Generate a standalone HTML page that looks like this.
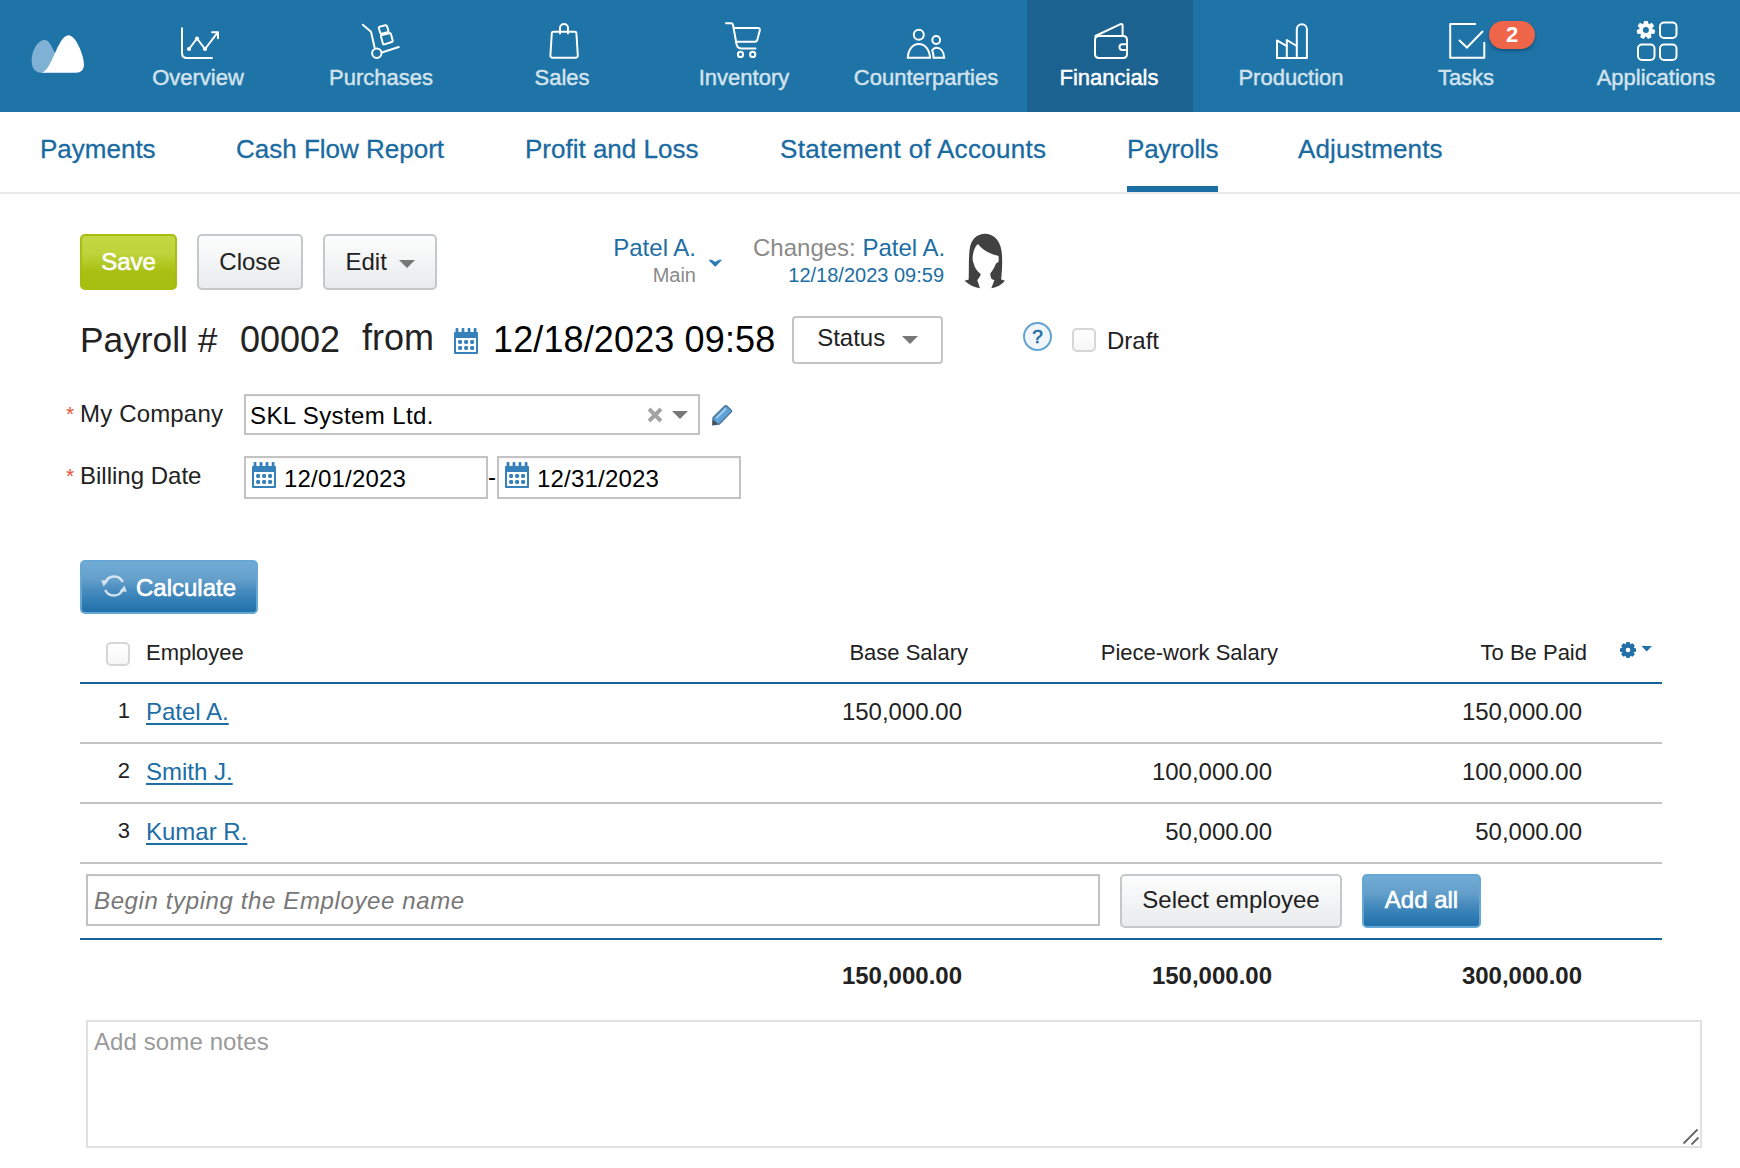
<!DOCTYPE html>
<html>
<head>
<meta charset="utf-8">
<title>Payroll</title>
<style>
*{box-sizing:border-box;margin:0;padding:0}
html,body{width:1740px;height:1168px;overflow:hidden;background:#fff}
body{font-family:"Liberation Sans",sans-serif;color:#222;position:relative}
.abs{position:absolute;white-space:nowrap}
/* top nav */
#nav{position:absolute;left:0;top:0;width:1740px;height:112px;background:#1e73a7}
#nav .active{position:absolute;left:1027px;top:0;width:166px;height:112px;background:#1b6291}
.nl{position:absolute;top:65px;height:26px;line-height:26px;font-size:22px;color:#d3e3ee;text-align:center;width:200px;margin-left:-100px;white-space:nowrap;-webkit-text-stroke:0.45px #d3e3ee}
.nl.on{color:#fff;-webkit-text-stroke:0.45px #fff}
.ni{position:absolute;overflow:visible}
/* sub nav */
#sub{position:absolute;left:0;top:112px;width:1740px;height:82px;border-bottom:2px solid #e7e7e7;background:#fff}
.sl{position:absolute;top:20px;height:34px;line-height:34px;font-size:26px;color:#1a6aa2;white-space:nowrap;-webkit-text-stroke:0.3px #1a6aa2}
#sub .ul{position:absolute;left:1127px;top:74px;width:91px;height:6px;background:#1c6ea4}
/* buttons */
.btn{position:absolute;border-radius:5px;font-size:24px;text-align:center;white-space:nowrap}
.grey{border:2px solid #c4c8cb;background:linear-gradient(#fdfdfd,#e9ebec);color:#222}
.green{border:2px solid #a6be12;background:linear-gradient(#c1d842 0%,#bdd43c 33%,#a9c012 68%,#a7bf10 100%);color:#fff;-webkit-text-stroke:0.6px #fff}
.blue{border:2px solid #67a7d4;background:linear-gradient(#70abd4 0%,#639fca 35%,#4a8dbf 55%,#3480b6 75%,#2170a9 100%);color:#fff;-webkit-text-stroke:0.6px #fff}
.white{border:2px solid #c4c4c4;background:#fff;color:#222}
.caret{display:inline-block;width:0;height:0;border-left:8px solid transparent;border-right:8px solid transparent;border-top:8px solid #777;vertical-align:middle}
.lnk{color:#1c6ea4}
.g{color:#8a8a8a}
.cb{width:24px;height:24px;border:2px solid #d6d6d6;border-radius:5px;background:linear-gradient(#fff,#f6f6f6)}
.inp{border:2px solid #c3c3c3;background:#fff;box-shadow:inset 0 1px 1px rgba(0,0,0,.04)}
.th{font-size:22px;line-height:28px;color:#222}
.td{font-size:24px;line-height:30px;color:#222}
.td.b{font-weight:bold}
.num{font-size:22px;line-height:28px;color:#222;right:1610px}
.nm{font-size:24px;line-height:30px;color:#1c6ea4;text-decoration:underline;left:146px;text-underline-offset:3px;text-decoration-thickness:2px}
.hr{left:80px;width:1582px;height:2px;background:#c4c4c4}
.hr.blue2{background:#17629b}
</style>
</head>
<body>
<svg width="0" height="0" style="position:absolute">
<defs>
<symbol id="cal" viewBox="0 0 24 28">
  <rect x="0" y="5" width="24" height="22" rx="1" fill="#3681b9"/>
  <rect x="2" y="11" width="20" height="14" fill="#fff"/>
  <g fill="#3681b9">
    <rect x="1.6" y="1" width="2.8" height="5" rx="0.8"/><rect x="7.6" y="1" width="2.8" height="5" rx="0.8"/><rect x="13.6" y="1" width="2.8" height="5" rx="0.8"/><rect x="19.7" y="1" width="2.8" height="5" rx="0.8"/>
    <rect x="4.1" y="13" width="4" height="4" rx="1.4"/><rect x="10.1" y="13" width="4" height="4" rx="1.4"/><rect x="16.1" y="13" width="4" height="4" rx="1.4"/>
    <rect x="4.1" y="19" width="4" height="4" rx="1.4"/><rect x="10.1" y="19" width="4" height="4" rx="1.4"/><rect x="16.1" y="19" width="4" height="4" rx="1.4"/>
  </g>
</symbol>
<symbol id="pencil" viewBox="0 0 21 21">
  <path d="M1 12.8 L12.8 1 Q13.8 0.2 14.8 1.1 L19.2 5.2 Q20 6 19.1 7 L7.4 19 L0.7 19.8 Z" fill="#5ba3d9" stroke="#4f7496" stroke-width="1.3" stroke-linejoin="round"/>
  <path d="M4.2 13.2 L14 3.6" stroke="#b4d6f0" stroke-width="1.5" fill="none"/>
  <path d="M0.6 19.9 L1 14.2 L6.2 19.3 Z" fill="#4a4f55"/>
</symbol>
<symbol id="refresh" viewBox="0 0 28 28">
  <g opacity="0.82">
  <path d="M5.2 10.6 A 9.6 9.6 0 0 1 22.8 10" stroke="#eef5fa" stroke-width="2.4" fill="none"/>
  <path d="M22.8 17.4 A 9.6 9.6 0 0 1 5.2 18" stroke="#eef5fa" stroke-width="2.4" fill="none"/>
  <path d="M1.2 8.2 L8.6 8.6 L3.6 14.4 Z" fill="#eef5fa"/>
  <path d="M26.8 19.8 L19.4 19.4 L24.4 13.6 Z" fill="#eef5fa"/>
  </g>
</symbol>
<symbol id="gear" viewBox="0 0 36 20">
  <g transform="translate(9,10)" fill="#236fa8">
    <circle r="6.3"/>
    <g><rect x="-2.1" y="-8" width="4.2" height="16" rx="1.2"/><rect x="-2.1" y="-8" width="4.2" height="16" rx="1.2" transform="rotate(45)"/><rect x="-2.1" y="-8" width="4.2" height="16" rx="1.2" transform="rotate(90)"/><rect x="-2.1" y="-8" width="4.2" height="16" rx="1.2" transform="rotate(135)"/></g>
    <circle r="2.3" fill="#fff"/>
  </g>
  <path d="M22.5 6 L33 6 L27.7 11.6 Z" fill="#236fa8"/>
</symbol>
</defs>
</svg>

<!-- ===== TOP NAV ===== -->
<div id="nav">
  <div class="active"></div>
  <svg class="ni" style="left:0;top:0" width="1740" height="112" viewBox="0 0 1740 112" fill="none" stroke="#fff" stroke-width="2" stroke-linecap="round" stroke-linejoin="round">
    <!-- logo -->
    <path d="M31.7 61 C31.7 50 38 40 44.6 40 C49 40 51.5 46 55.6 54.5 L46 72.7 L41 72.7 C35 72.7 31.7 68 31.7 61 Z" fill="#7fb1d5" stroke="none"/>
    <path d="M42 72.7 C52 70 58 35.3 68.5 35.3 C76 35.3 84 56 84 64.5 C84 70 80.5 72.7 76.5 72.7 Z" fill="#fff" stroke="none"/>
    <!-- overview -->
    <path d="M182 28.3 V53 Q182 58 187 58 H212"/>
    <path d="M189 49 L197 38.5 L205 49 L217.6 32.6"/>
    <path d="M212 32.2 H218 V38.3"/>
    <circle cx="189" cy="49" r="2.1" fill="#fff" stroke="none"/><circle cx="197" cy="38.5" r="2.1" fill="#fff" stroke="none"/><circle cx="205" cy="49" r="2.1" fill="#fff" stroke="none"/>
    <!-- purchases -->
    <path d="M362.8 24.7 L371 31.7 L374.6 47.5"/>
    <circle cx="376.8" cy="53.2" r="4.7"/>
    <path d="M382.6 52.3 L398.8 47"/>
    <path d="M379.6 26.8 L385.4 25.3 Q386.6 25 387 26.2 L388.4 30.6 Q388.7 31.8 387.5 32.1 L381.7 33.7 Q380.5 34 380.2 32.8 L378.8 28.3 Q378.5 27.1 379.6 26.8 Z"/>
    <path d="M382 35 L389.3 33.2 Q390.5 32.9 390.9 34.1 L392.7 40.4 Q393 41.6 391.8 42 L384.4 44.4 Q383.2 44.8 382.9 43.6 L381 36.5 Q380.7 35.3 382 35 Z"/>
    <!-- sales -->
    <path d="M553.3 31.8 H574.9 Q576.3 31.8 576.4 33.2 L577.8 55.2 Q577.9 57.8 575.4 57.8 H552.8 Q550.3 57.8 550.4 55.2 L551.8 33.2 Q551.9 31.8 553.3 31.8 Z"/>
    <path d="M560 34.3 V28.1 A4 4 0 0 1 568 28.1 V34.3" stroke-linecap="butt"/>
    <!-- inventory -->
    <path d="M726 23.2 H731 Q732.6 23.2 733 24.8 L736.6 44.5 Q737.6 48.5 741.5 48.5 H755.5"/>
    <path d="M734 28.1 H757.8 Q760.4 28.1 759.8 30.6 L757.4 39.6 Q756.9 41.7 754.8 41.7 H736.5"/>
    <circle cx="740.5" cy="54.4" r="2.6"/><circle cx="752.7" cy="54.4" r="2.6"/>
    <!-- counterparties -->
    <circle cx="918.8" cy="34.8" r="5"/>
    <path d="M907.8 57.8 C908.2 49 913 44 918.8 44 C924.6 44 929.6 49 930 57.8 Z" stroke-linejoin="miter"/>
    <circle cx="936.2" cy="40" r="3.9"/>
    <path d="M932.2 50.2 C933.2 48.6 934.8 47.8 936.4 47.8 C940.6 47.8 943.8 51.5 944.2 57.8 H933.6 C933.5 55 933 52.4 932.2 50.2 Z" stroke-linejoin="miter"/>
    <!-- financials -->
    <path d="M1095.4 36 L1120.5 24.2 Q1122.6 23.4 1122.6 25.6 V35.5"/>
    <path d="M1099 36 H1123 Q1127 36 1127 40 V54 Q1127 58 1123 58 H1099 Q1095 58 1095 54 V40 Q1095 36 1099 36 Z"/>
    <path d="M1127 44.2 H1122.4 A2.9 2.9 0 0 0 1122.4 50 H1127"/>
    <!-- production -->
    <path d="M1277 58 V40.4 L1286.8 46.2"/>
    <path d="M1286.8 58 V40 L1296.8 46"/>
    <path d="M1296.8 58 V29.2 A5.05 5.05 0 0 1 1306.9 29.2 V58 H1277"/>
    <!-- tasks -->
    <path d="M1476 24 H1450.2 V57.8 H1484.3 V42" stroke-linecap="butt"/>
    <path d="M1459 40 L1467 47.5 L1483 31" stroke-linejoin="miter" stroke-linecap="butt"/>
        <!-- applications -->
    <rect x="1660" y="22.5" width="16.5" height="15.5" rx="4"/>
    <rect x="1638" y="44.5" width="16.5" height="15.5" rx="4"/>
    <rect x="1660" y="44.5" width="16.5" height="15.5" rx="4"/>
    <g transform="translate(1645.9,30)" fill="#fff" stroke="none"><circle r="6.8"/><path d="M-2.6 -6 L-1.9 -9.1 H1.9 L2.6 -6 Z" transform="rotate(0.00)"/><path d="M-2.6 -6 L-1.9 -9.1 H1.9 L2.6 -6 Z" transform="rotate(51.43)"/><path d="M-2.6 -6 L-1.9 -9.1 H1.9 L2.6 -6 Z" transform="rotate(102.86)"/><path d="M-2.6 -6 L-1.9 -9.1 H1.9 L2.6 -6 Z" transform="rotate(154.29)"/><path d="M-2.6 -6 L-1.9 -9.1 H1.9 L2.6 -6 Z" transform="rotate(205.71)"/><path d="M-2.6 -6 L-1.9 -9.1 H1.9 L2.6 -6 Z" transform="rotate(257.14)"/><path d="M-2.6 -6 L-1.9 -9.1 H1.9 L2.6 -6 Z" transform="rotate(308.57)"/><circle r="3" fill="#1e73a7"/></g>
  </svg>
  <div class="abs" style="left:1489px;top:21px;width:46px;height:27.6px;border-radius:14px;background:#ee6549;box-shadow:0 2px 3px rgba(10,40,70,.45);line-height:28px;text-align:center;color:#fff;font-size:22px;font-weight:bold">2</div>
  <div class="nl" style="left:198px">Overview</div>
  <div class="nl" style="left:381px">Purchases</div>
  <div class="nl" style="left:562px">Sales</div>
  <div class="nl" style="left:744px">Inventory</div>
  <div class="nl" style="left:926px">Counterparties</div>
  <div class="nl on" style="left:1109px">Financials</div>
  <div class="nl" style="left:1291px">Production</div>
  <div class="nl" style="left:1466px">Tasks</div>
  <div class="nl" style="left:1656px">Applications</div>
</div>

<!-- ===== SUB NAV ===== -->
<div id="sub">
  <div class="sl" style="left:40px">Payments</div>
  <div class="sl" style="left:236px">Cash Flow Report</div>
  <div class="sl" style="left:525px">Profit and Loss</div>
  <div class="sl" style="left:780px;letter-spacing:0.29px">Statement of Accounts</div>
  <div class="sl" style="left:1127px;letter-spacing:-0.15px">Payrolls</div>
  <div class="sl" style="left:1298px;letter-spacing:0.15px">Adjustments</div>
  <div class="ul"></div>
</div>

<!-- ===== TOOLBAR ===== -->
<div class="btn green" style="left:80px;top:234px;width:97px;height:56px;line-height:52px">Save</div>
<div class="btn grey" style="left:197px;top:234px;width:106px;height:56px;line-height:52px">Close</div>
<div class="btn grey" style="left:323px;top:234px;width:114px;height:56px;line-height:52px">Edit <span class="caret" style="margin-left:5px"></span></div>

<div class="abs lnk" style="right:1044px;top:233px;font-size:24px;line-height:30px">Patel A.</div>
<div class="abs g" style="right:1044px;top:263px;font-size:20px;line-height:24px">Main</div>
<div class="abs g" style="left:753px;top:233px;font-size:24px;line-height:30px">Changes: <span class="lnk">Patel A.</span></div>
<div class="abs lnk" style="right:796px;top:263px;font-size:20px;line-height:24px">12/18/2023 09:59</div>
<svg class="abs" style="left:700px;top:250px" width="32" height="24" viewBox="700 250 32 24"><path d="M709 260.2 L711.6 260.2 L715.2 262.3 L718.8 260.2 L721.4 260.2 L715.2 266.4 Z" fill="#2b7ab5" stroke="#2b7ab5" stroke-width="0.8" stroke-linejoin="round"/></svg>
<svg class="abs" style="left:960px;top:230px" width="50" height="62" viewBox="960 230 50 62"><path fill="#414141" d="M985.5,233.7 C976,233.7 971,240 969.7,249 C968.5,258 969,270 968.7,279.5 L964.6,280.8 C969,285 974,287.5 980,288.2 L977.3,280.3 C979,278 980.5,276 980.7,274.1 C977,271 974.5,267.5 973.8,263.8 C972.5,261 972.5,258 972.8,255.6 C973.5,250 975.5,246 978,244 C981,248 985,251 989.6,252.9 C992.5,254.2 995.5,255.2 998.5,256 C998.8,258 998.8,260 998.5,261.8 L995.8,263.8 C994.5,267.5 992.5,271 990.3,273.4 C990.3,275.5 990.8,277.5 991.6,278.9 L994.4,280.3 L991.3,288.2 C997,287.5 1001.5,285 1005,280.8 L1001.2,279.6 C1002,270 1002.5,262 1001.9,254.2 C1001.5,243 995,233.7 985.5,233.7 Z"/></svg>

<!-- ===== TITLE ROW ===== -->
<div class="abs" style="left:80px;top:318px;font-size:35.3px;line-height:44px;color:#222">Payroll #</div>
<div class="abs" style="left:240px;top:318px;font-size:36px;line-height:44px;color:#222">00002</div>
<div class="abs" style="left:362px;top:316px;font-size:36px;line-height:44px;color:#222">from</div>
<svg class="abs" style="left:454px;top:327px" width="24" height="28" viewBox="0 0 24 28"><use href="#cal"/></svg>
<div class="abs" style="left:493px;top:318px;font-size:36px;line-height:44px;color:#000;letter-spacing:0.13px">12/18/2023 09:58</div>
<div class="btn white" style="left:792px;top:316px;width:151px;height:48px;line-height:39px;border-radius:4px">Status <span class="caret" style="margin-left:10px"></span></div>
<div class="abs" style="left:1023px;top:322px;width:29px;height:29px;border:2px solid #62a4d1;border-radius:50%;background:#f1f6fa;color:#1c6ea4;font-size:19px;line-height:25px;text-align:center;-webkit-text-stroke:0.6px #1c6ea4">?</div>
<div class="abs cb" style="left:1072px;top:328px"></div>
<div class="abs" style="left:1107px;top:326px;font-size:24px;line-height:30px">Draft</div>

<!-- ===== FORM ===== -->
<div class="abs" style="left:66px;top:399px;font-size:21px;line-height:30px;color:#e8543a">*</div>
<div class="abs" style="left:80px;top:399px;font-size:24px;line-height:30px;letter-spacing:0.17px">My Company</div>
<div class="abs inp" style="left:244px;top:394px;width:456px;height:41px"></div>
<div class="abs" style="left:250px;top:401px;font-size:24px;line-height:30px;color:#000;letter-spacing:0.4px">SKL System Ltd.</div>
<svg class="abs" style="left:647px;top:407px" width="16" height="16" viewBox="0 0 16 16"><path d="M2 2 L14 14 M14 2 L2 14" stroke="#a3a3a3" stroke-width="3.9" fill="none"/></svg>
<div class="abs caret" style="left:672px;top:411px"></div>
<svg class="abs" style="left:712px;top:405px" width="21" height="21" viewBox="0 0 21 21"><use href="#pencil"/></svg>

<div class="abs" style="left:66px;top:461px;font-size:21px;line-height:30px;color:#e8543a">*</div>
<div class="abs" style="left:80px;top:461px;font-size:24px;line-height:30px">Billing Date</div>
<div class="abs inp" style="left:244px;top:456px;width:244px;height:43px"></div>
<svg class="abs" style="left:252px;top:461px" width="24" height="28" viewBox="0 0 24 28"><use href="#cal"/></svg>
<div class="abs" style="left:284px;top:464px;font-size:24px;line-height:30px;color:#000;letter-spacing:0.2px">12/01/2023</div>
<div class="abs" style="left:488px;top:462px;font-size:24px;line-height:30px;color:#000">-</div>
<div class="abs inp" style="left:497px;top:456px;width:244px;height:43px"></div>
<svg class="abs" style="left:505px;top:461px" width="24" height="28" viewBox="0 0 24 28"><use href="#cal"/></svg>
<div class="abs" style="left:537px;top:464px;font-size:24px;line-height:30px;color:#000;letter-spacing:0.2px">12/31/2023</div>

<div class="btn blue" style="left:80px;top:560px;width:178px;height:54px;line-height:51px;text-align:left;padding-left:54px">Calculate</div>
<svg class="abs" style="left:100px;top:572px" width="28" height="28" viewBox="0 0 28 28"><use href="#refresh"/></svg>

<!-- ===== TABLE ===== -->
<div class="abs cb" style="left:106px;top:642px"></div>
<div class="abs th" style="left:146px;top:639px">Employee</div>
<div class="abs th" style="right:772px;top:639px">Base Salary</div>
<div class="abs th" style="right:462px;top:639px">Piece-work Salary</div>
<div class="abs th" style="right:153px;top:639px">To Be Paid</div>
<svg class="abs" style="left:1619px;top:640px" width="36" height="20" viewBox="0 0 36 20"><use href="#gear"/></svg>
<div class="abs hr blue2" style="top:682px"></div>

<div class="abs num" style="top:697px">1</div>
<a class="abs nm" style="top:697px">Patel A.</a>
<div class="abs td" style="right:778px;top:697px">150,000.00</div>
<div class="abs td" style="right:158px;top:697px">150,000.00</div>
<div class="abs hr" style="top:742px"></div>

<div class="abs num" style="top:757px">2</div>
<a class="abs nm" style="top:757px">Smith J.</a>
<div class="abs td" style="right:468px;top:757px">100,000.00</div>
<div class="abs td" style="right:158px;top:757px">100,000.00</div>
<div class="abs hr" style="top:802px"></div>

<div class="abs num" style="top:817px">3</div>
<a class="abs nm" style="top:817px">Kumar R.</a>
<div class="abs td" style="right:468px;top:817px">50,000.00</div>
<div class="abs td" style="right:158px;top:817px">50,000.00</div>
<div class="abs hr" style="top:862px"></div>

<div class="abs inp" style="left:86px;top:874px;width:1014px;height:52px"></div>
<div class="abs" style="left:94px;top:886px;font-size:24px;line-height:30px;font-style:italic;color:#777;letter-spacing:0.62px">Begin typing the Employee name</div>
<div class="btn grey" style="left:1120px;top:874px;width:222px;height:54px;line-height:48px">Select employee</div>
<div class="btn blue" style="left:1362px;top:874px;width:119px;height:54px;line-height:48px">Add all</div>
<div class="abs hr blue2" style="top:938px"></div>

<div class="abs td b" style="right:778px;top:961px">150,000.00</div>
<div class="abs td b" style="right:468px;top:961px">150,000.00</div>
<div class="abs td b" style="right:158px;top:961px">300,000.00</div>

<div class="abs" style="left:86px;top:1020px;width:1616px;height:128px;border:2px solid #e1e1e1;background:#fff"></div>
<div class="abs" style="left:94px;top:1027px;font-size:24px;line-height:30px;color:#9a9a9a;letter-spacing:0.1px">Add some notes</div>
<svg class="abs" style="left:1680px;top:1126px" width="20" height="20" viewBox="0 0 20 20"><path d="M3.5 17.5 L17.5 3.5 M11.5 18.5 L18.5 11.5" stroke="#666" stroke-width="1.8" fill="none"/></svg>

</body>
</html>
